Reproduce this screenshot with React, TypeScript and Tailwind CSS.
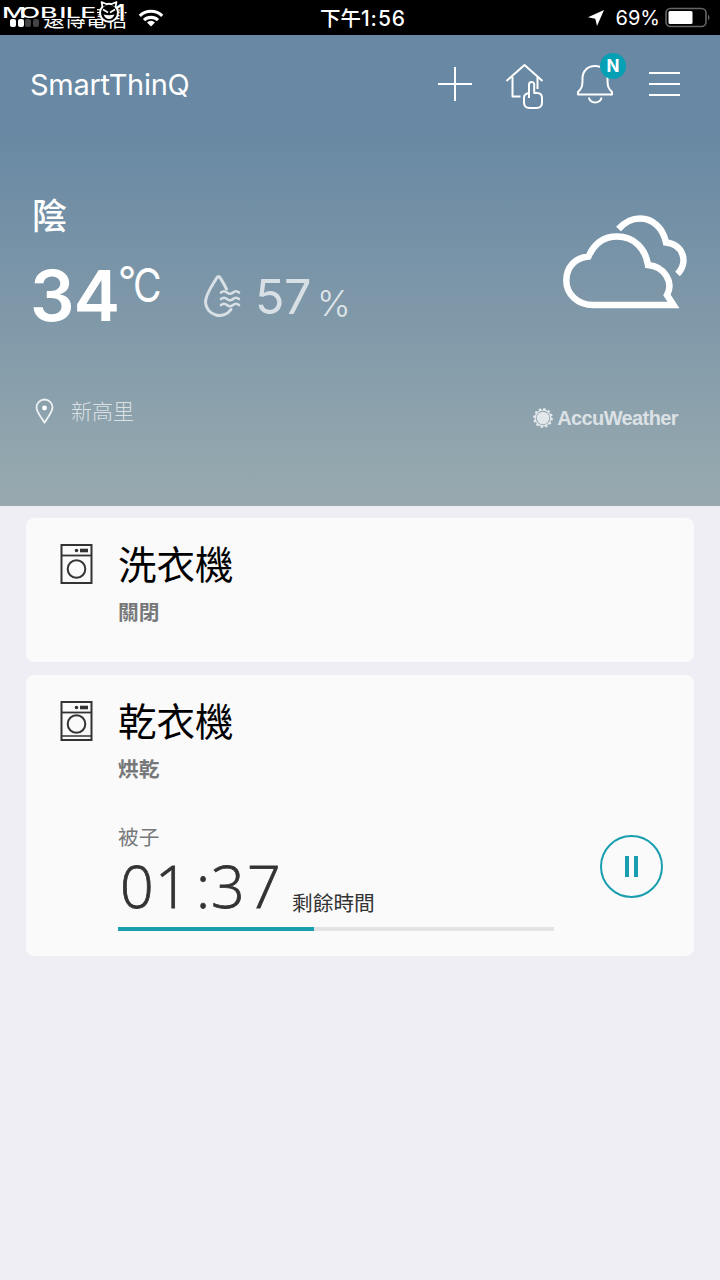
import type { ReactNode } from "react";

const CJK = "font-['Inter','Noto_Sans_CJK_TC',sans-serif]";

function Watermark() {
	return (
		<svg className="absolute left-0 top-0" width="130" height="30" viewBox="0 0 130 30" fill="none">
			<path d="M3 7h94v12H3z" fill="#000" />
			<g fill="#fff" fontFamily="Inter, sans-serif">
				<g transform="translate(2 17.800) scale(1.900 1)" fontWeight="500">
					<text fontSize="14" x="0 9.300 20 30.200 33.500 41.200">MOBILE</text>
				</g>
				<text x="115.500" y="20.500" fontSize="23" fontWeight="600" stroke="#000" strokeWidth="2" paintOrder="stroke">1</text>
			</g>
			<circle cx="109" cy="12.800" r="9" fill="#000" stroke="#fff" strokeWidth="2" />
			<path d="M102.500 7l-1-5 6 2.500M115.500 7l1-5-6 2.500" fill="#000" stroke="#fff" strokeWidth="1.700" strokeLinejoin="round" />
			<path d="M103 9.500l5 3M115 9.500l-5 3" stroke="#fff" strokeWidth="1.600" />
			<path d="M103.500 14.500q5.500 1.500 11 0-2 4.500-5.500 4.500t-5.500-4.500z" fill="#fff" />
		</svg>
	);
}

function StatusBar() {
	return (
		<div className={`relative h-[35px] bg-black text-white ${CJK} flex items-center justify-between pl-[10px] pr-[8px]`}>
			<div className="flex items-center">
				<div className="flex gap-[1.500px] mt-[10px]">
					<span className="w-[6px] h-[8px] rounded-[2px] bg-white" />
					<span className="w-[6px] h-[8px] rounded-[2px] bg-white" />
					<span className="w-[6px] h-[8px] rounded-[2px] bg-[#444]" />
					<span className="w-[6px] h-[8px] rounded-[2px] bg-[#444]" />
				</div>
				<span className="ml-[5px] mt-[2px] text-[21px] leading-[33px]">遠傳電信</span>
				<svg className="ml-[10px]" width="26" height="20" viewBox="0 0 26 20" fill="none" stroke="#fff" strokeWidth="3.200">
					<path d="M1.800 7.800a16 16 0 0 1 22.400 0" />
					<path d="M6 12.200a10 10 0 0 1 14 0" />
					<path d="M13 18.500l-4-4a5.700 5.700 0 0 1 8 0z" fill="#fff" stroke="none" />
				</svg>
			</div>
			<span className="absolute left-[320px] top-0 flex text-[20.500px] leading-[37px] font-medium">
				下午<span className="text-[21px] tracking-[0.900px]">1:56</span>
			</span>
			<div className="flex items-center">
				<svg width="18" height="18" viewBox="0 0 18 18" fill="#fff">
					<path d="M17 1L1 8.300l7.300 1.500L10 17z" />
				</svg>
				<span className="ml-[11px] mt-px text-[20px] leading-[34px]">69%</span>
				<svg className="ml-[5px]" width="47" height="21" viewBox="0 0 47 21" fill="none">
					<rect x="1" y="1.500" width="40" height="18" rx="4.500" stroke="#666" strokeWidth="1.600" />
					<rect x="3.500" y="4" width="24" height="13" rx="1.500" fill="#fff" />
					<path d="M43 7.500q3 3 0 6z" fill="#666" />
				</svg>
			</div>
			<Watermark />
		</div>
	);
}

function Header() {
	return (
		<div className="h-[99px] flex items-center justify-between pl-[30px] pr-[39px]">
			<h1 className="text-[29px] leading-none font-normal tracking-[-0.300px]">SmartThinQ</h1>
			<div className="flex items-center">
				<svg className="-mt-[2px]" width="36" height="36" viewBox="0 0 36 36" fill="none" stroke="#fff" strokeWidth="2">
					<path d="M18 1v34M1 18h34" />
				</svg>
				<svg className="ml-[32px]" width="40" height="48" viewBox="0 0 40 48" fill="none" stroke="#fff" strokeWidth="2" strokeLinejoin="round">
					<path d="M1.500 20L19.500 4 37.500 20" />
					<path d="M7.500 16v19.500h8M32.500 16v12" />
					<path d="M24 37V23.500a2.600 2.600 0 0 1 5.200 0V32h2.800q5 0 5 5v4.500q0 5.500-5.500 5.500h-7q-5.500 0-5.500-5.500v-5q0-3.500 5-4.500" />
				</svg>
				<div className="relative ml-[32px] -mt-[2px]">
					<svg width="36" height="42" viewBox="0 0 36 42" fill="none" stroke="#fff" strokeWidth="2" strokeLinejoin="round">
						<path d="M18 3c7.500 0 12.500 5 12.500 12.500 0 8 .5 9.500 4.500 13.500v2.500H1v-2.500c4-4 4.500-5.500 4.500-13.500C5.500 8 10.500 3 18 3z" />
						<path d="M12 34.500a6.200 5 0 0 0 12.400 0" />
					</svg>
					<span className="absolute left-[23px] -top-[10px] size-[26px] rounded-full bg-[#06a0b4] text-center text-[17px] leading-[26px] font-bold">N</span>
				</div>
				<svg className="ml-[35px] -mt-[2px]" width="33" height="28" viewBox="0 0 33 28" stroke="#fff" strokeWidth="2">
					<path d="M1 3h31M1 14h31M1 25h31" />
				</svg>
			</div>
		</div>
	);
}

function Weather() {
	return (
		<section className={`h-[471px] bg-linear-to-b from-[#6888a3] from-20% to-[#98aaaf] text-white ${CJK}`}>
			<Header />
			<div className="flex justify-between pl-[32px] pr-[32px] h-[236px]">
				<div>
					<div className="mt-[62px] text-[35px] leading-[40px] font-medium">陰</div>
					<div className="mt-[20px] flex h-[80px]">
						<span className="-ml-[2px] w-[87px] text-[70px] leading-[80px] font-semibold tracking-[-1px]">34</span>
						<span className="w-[15px] text-[40px] leading-[50px] ml-[1px]">°</span>
						<span className="text-[46px] leading-[59px] w-[31px] origin-left scale-x-[0.850]">C</span>
						<svg className="ml-[38px] mt-[17px]" width="40" height="50" viewBox="0 0 40 50" fill="none" stroke="#fff" strokeOpacity=".7" strokeWidth="3" strokeLinecap="round">
							<path d="M24.500 16C22 11 20 8 18 4.500q-1.500-2-3 0C10 13 3.500 21 3.500 29.500a14 14 0 0 0 25.500 7" strokeLinejoin="round" />
							<path d="M19 19.500q3-2.500 6 0t6 0 6 0M19 26q3-2.500 6 0t6 0 6 0M19 32q3-2.500 6 0t6 0 6 0" strokeWidth="2.600" />
						</svg>
						<span className="ml-[13px] w-[60px] text-[48.500px] leading-[81px] font-normal tracking-[-0.500px] text-white/70">57</span>
						<span className="ml-[2px] text-[36px] leading-[95px] font-light text-white/75">%</span>
					</div>
				</div>
				<svg className="mt-[81px]" width="126" height="96" viewBox="0 0 126 96" fill="none" stroke="#fff" strokeWidth="6.500">
					<path d="M111.500 90H31.500C15.500 90 4.300 79 4.300 65.500 4.300 52 13.500 42.500 26.500 41.500 33 27 43 21.500 55 21.500c17 0 28.500 12 31 28.500C102.500 51.500 112 67 105 80z" strokeLinejoin="miter" strokeMiterlimit="10" />
					<path d="M56.500 14C62 8 70 3.500 78 3.500 91 3.500 101 13 104 27.500 121 29 127 47 115.500 59" />
				</svg>
			</div>
			<div className="flex justify-between items-center h-[82px] pl-[35px] pr-[42px] text-white/70">
				<div className="flex items-center">
					<svg width="19" height="27" viewBox="0 0 19 27" fill="none" stroke="#fff" strokeOpacity=".85" strokeWidth="1.800">
						<path d="M9.500 24.500C5 18 1.500 13.500 1.500 9.500a8 8 0 0 1 16 0c0 4-3.500 8.500-8 15z" />
						<circle cx="9.500" cy="10" r="2.400" fill="#fff" stroke="none" />
					</svg>
					<span className="ml-[17px] mt-px text-[21px] leading-none font-light">新高里</span>
				</div>
				<div className="flex items-center mt-[13px]">
					<svg width="22" height="22" viewBox="0 0 22 22" fill="none" stroke="#fff" strokeOpacity=".75">
						<circle cx="11" cy="11" r="6.300" fill="#fff" fillOpacity=".75" stroke="none" />
						<circle cx="11" cy="11" r="7.800" strokeWidth="1.300" />
						<circle cx="11" cy="11" r="9" strokeWidth="1.800" strokeDasharray="2.360 2.360" />
					</svg>
					<span className="ml-[3px] mt-px text-[20px] leading-none font-bold tracking-[-0.600px] font-['Liberation_Sans',sans-serif]">AccuWeather</span>
				</div>
			</div>
		</section>
	);
}

function MachineIcon({ drawer = false }: { drawer?: boolean }) {
	return (
		<svg className="shrink-0" width="33" height="41" viewBox="0 0 33 41" fill="none" stroke="#333" strokeWidth="2">
			<rect x="1.500" y="2" width="30" height="38" />
			<path d="M1.500 12.500h30" strokeWidth="1.800" />
			{drawer && <path d="M1.500 36h30" strokeWidth="1.500" />}
			<circle cx="16.500" cy={drawer ? 24 : 26} r="8.800" />
			<circle cx="16.500" cy="7.500" r="1.800" fill="#333" stroke="none" />
			<path d="M20 7.500h8" strokeWidth="3.600" />
		</svg>
	);
}

function DeviceCard({ name, status, drawer, className, children }: { name: string; status: string; drawer?: boolean; className: string; children?: ReactNode }) {
	return (
		<div className={`mx-[26px] rounded-[8px] bg-[#fafafa] pl-[34px] pt-[25px] flex ${CJK} ${className}`}>
			<MachineIcon drawer={drawer} />
			<div className="ml-[25px] flex-1">
				<h2 className="pt-px text-[38.500px] leading-[42px] text-black">{name}</h2>
				<p className="mt-[17px] text-[20.700px] leading-[20px] font-bold text-[#77787a]">{status}</p>
				{children}
			</div>
		</div>
	);
}

export default function App() {
	const progress = 45;
	return (
		<div className="w-[720px] h-[1280px] bg-[#efeef4] overflow-hidden">
			<StatusBar />
			<Weather />
			<DeviceCard name="洗衣機" status="關閉" className="mt-[12px] h-[144px]" />
			<DeviceCard name="乾衣機" status="烘乾" drawer className="mt-[13px] h-[281px]">
				<div className="flex mt-[48px]">
					<div className="w-[436px]">
						<p className="text-[20.700px] leading-[20px] text-[#77787a]">被子</p>
						<div className="h-[79px] flex text-[#333]">
							<div className="flex text-[59px] leading-[75px] font-light font-['Open_Sans',sans-serif] [-webkit-text-stroke:0.8px_#333]">
								<span className="w-[37px] pl-[2px]">0</span>
								<span className="w-[41px]">1</span>
								<span className="w-[15px]">:</span>
								<span className="w-[36px]">3</span>
								<span className="w-[45px]">7</span>
							</div>
							<span className="text-[20.700px] leading-[112px]">剩餘時間</span>
						</div>
						<div className="h-[4px] bg-[#e3e3e5]">
							<div className="h-full bg-[#189eae]" style={{ width: `${progress}%` }} />
						</div>
					</div>
					<button className="ml-[46px] mt-[7px] size-[63px] rounded-full border-2 border-[#189eae] flex items-center justify-center gap-[5px]">
						<span className="w-[4px] h-[21px] bg-[#189eae]" />
						<span className="w-[4px] h-[21px] bg-[#189eae]" />
					</button>
				</div>
			</DeviceCard>
		</div>
	);
}
